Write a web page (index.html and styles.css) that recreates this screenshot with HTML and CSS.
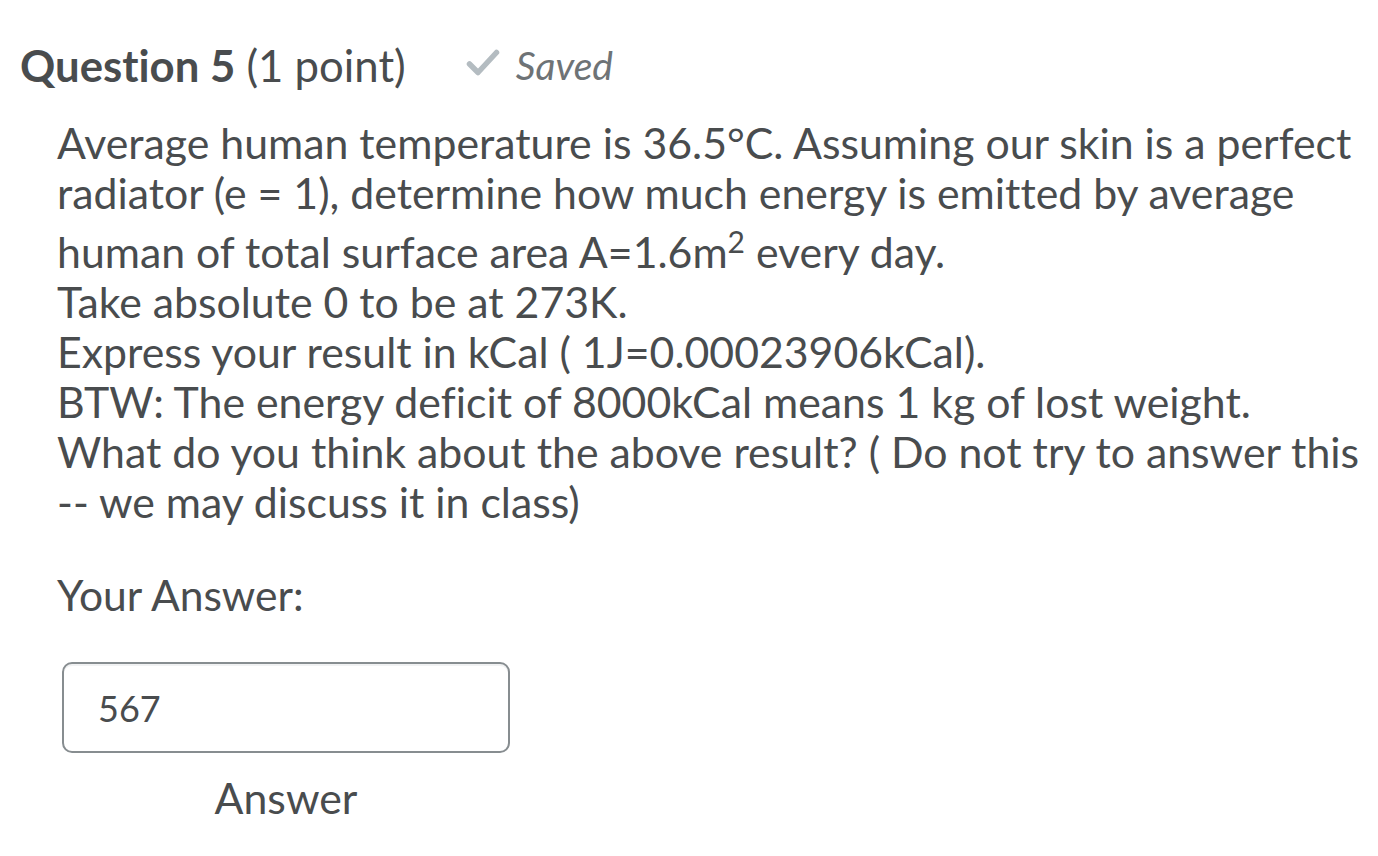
FILE: index.html
```html
<!DOCTYPE html>
<html>
<head>
<meta charset="utf-8">
<link rel="stylesheet" href="styles.css">
</head>
<body>
<div class="page">
  <div class="q-header">
    <h2 class="q-title"><strong>Question 5</strong> <span class="pts">(1 point)</span></h2>
    <div class="saved">
      <svg class="check" width="34" height="28" viewBox="0 0 34 28"><path d="M3.5 15 L12 23.5 L30.5 3.5" fill="none" stroke="#b4bcc1" stroke-width="5.5" stroke-linecap="round" stroke-linejoin="round"/></svg>
      <span class="saved-text">Saved</span>
    </div>
  </div>
  <div class="q-body">
    <p class="q-text">Average human temperature is 36.5°C. Assuming our skin is a perfect radiator (e = 1), determine how much energy is emitted by average human of total surface area A=1.6m<sup>2</sup> every day.<br>Take absolute 0 to be at 273K.<br>Express your result in kCal ( 1J=0.00023906kCal).<br>BTW: The energy deficit of 8000kCal means 1 kg of lost weight. What do you think about the above result? ( Do not try to answer this -- we may discuss it in class)</p>
    <div class="your-answer">Your Answer:</div>
    <div class="answer-block">
      <div class="answer-input">567</div>
      <div class="answer-label">Answer</div>
    </div>
  </div>
</div>
</body>
</html>
```

FILE: styles.css
```css
html, body {
  margin: 0;
  padding: 0;
  background: #ffffff;
}
body {
  font-family: Lato, "Noto Sans", sans-serif;
  color: #494c4e;
  font-variant-ligatures: none;
}
.page {
  padding: 34px 0 0 20px;
}
.q-header {
  display: flex;
  align-items: center;
  gap: 60px;
  height: 62px;
}
.q-title {
  margin: 0;
  font-size: 43.7px;
  font-weight: 400;
  line-height: 62px;
}
.q-title strong {
  font-weight: 700;
}
.saved {
  display: flex;
  align-items: center;
  gap: 16px;
  color: #6e7376;
}
.check {
  display: block;
  margin-top: -4px;
}
.saved-text {
  font-style: italic;
  font-size: 39px;
}
.q-body {
  padding: 22px 0 0 37px;
  width: 1304px;
}
.q-text {
  margin: 0;
  font-size: 42.8px;
  line-height: 50px;
}
.q-text sup {
  font-size: 30px;
  line-height: 46px;
}
.your-answer {
  margin-top: 43px;
  font-size: 42.6px;
  line-height: 50px;
}
.answer-block {
  margin-top: 42px;
  width: 448px;
  padding-left: 5px;
}
.answer-input {
  box-sizing: border-box;
  height: 91px;
  border: 2px solid #878d90;
  border-radius: 10px;
  box-shadow: inset 0 2px 0 #f1f2f3;
  padding: 0 0 0 34px;
  display: flex;
  align-items: center;
  font-size: 36px;
}
.answer-label {
  text-align: center;
  font-size: 42.8px;
  line-height: 50px;
  margin-top: 20px;
}
```
